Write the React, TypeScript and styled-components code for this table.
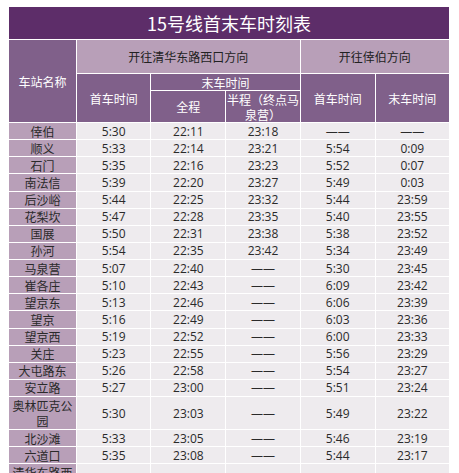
import React from "react";
import styled, { createGlobalStyle } from "styled-components";

const Global = createGlobalStyle`
  html, body { margin: 0; padding: 0; background: #ffffff; }
  body {
    padding: 6px 0 0 8px;
    font-family: "Open Sans", "Noto Sans CJK SC", sans-serif;
  }
`;

const Table = styled.table`
  width: 442px;
  table-layout: fixed;
  border-collapse: collapse;
  border: 1px solid #ffffff;
  font-size: 12px;
  line-height: 15px;
`;

const Row = styled.tr<{ $h: number }>`
  height: ${(p) => p.$h}px;
`;

const Cell = styled.td`
  border: 1px solid #ffffff;
  padding: 0 3px;
  text-align: center;
  vertical-align: middle;
  overflow: hidden;
`;

const TitleCell = styled(Cell)`
  background: #5d2d69;
  color: #ffffff;
  font-size: 18px;
  font-family: "Noto Sans CJK SC", sans-serif;
`;

const GroupCell = styled(Cell)`
  background: #b89fb8;
  color: #222222;
  font-family: "Noto Sans CJK SC", sans-serif;
`;

const HeadCell = styled(Cell)<{ $tight?: boolean }>`
  background: #80608a;
  color: #ffffff;
  font-family: "Noto Sans CJK SC", sans-serif;
  padding: ${(p) => (p.$tight ? "0" : "0 3px")};
  white-space: ${(p) => (p.$tight ? "nowrap" : "normal")};
`;

const StationCell = styled(Cell)`
  background: #b89fb8;
  color: #2a2a2a;
  font-family: "Noto Sans CJK SC", sans-serif;
`;

const DataCell = styled(Cell)`
  background: #eeebee;
  color: #2a2a2a;
`;

type Stop = [string, string, string, string, string, string];

const stops: Stop[] = [
  ["倖伯", "5:30", "22:11", "23:18", "——", "——"],
  ["顺义", "5:33", "22:14", "23:21", "5:54", "0:09"],
  ["石门", "5:35", "22:16", "23:23", "5:52", "0:07"],
  ["南法信", "5:39", "22:20", "23:27", "5:49", "0:03"],
  ["后沙峪", "5:44", "22:25", "23:32", "5:44", "23:59"],
  ["花梨坎", "5:47", "22:28", "23:35", "5:40", "23:55"],
  ["国展", "5:50", "22:31", "23:38", "5:38", "23:52"],
  ["孙河", "5:54", "22:35", "23:42", "5:34", "23:49"],
  ["马泉营", "5:07", "22:40", "——", "5:30", "23:45"],
  ["崔各庄", "5:10", "22:43", "——", "6:09", "23:42"],
  ["望京东", "5:13", "22:46", "——", "6:06", "23:39"],
  ["望京", "5:16", "22:49", "——", "6:03", "23:36"],
  ["望京西", "5:19", "22:52", "——", "6:00", "23:33"],
  ["关庄", "5:23", "22:55", "——", "5:56", "23:29"],
  ["大屯路东", "5:26", "22:58", "——", "5:54", "23:27"],
  ["安立路", "5:27", "23:00", "——", "5:51", "23:24"],
  ["奥林匹克公园", "5:30", "23:03", "——", "5:49", "23:22"],
  ["北沙滩", "5:33", "23:05", "——", "5:46", "23:19"],
  ["六道口", "5:35", "23:08", "——", "5:44", "23:17"],
  ["清华东路西口", "5:37", "23:10", "——", "5:42", "23:15"],
];

const widths = [68, 74, 75, 74, 75, 74];

export default function App() {
  return (
    <>
      <Global />
      <Table>
        <colgroup>
          {widths.map((w, i) => (
            <col key={i} style={{ width: w }} />
          ))}
        </colgroup>
        <thead>
          <Row $h={33}>
            <TitleCell colSpan={6}>15号线首末车时刻表</TitleCell>
          </Row>
          <Row $h={34}>
            <HeadCell rowSpan={3}>车站名称</HeadCell>
            <GroupCell colSpan={3}>开往清华东路西口方向</GroupCell>
            <GroupCell colSpan={2}>开往倖伯方向</GroupCell>
          </Row>
          <Row $h={17}>
            <HeadCell rowSpan={2}>首车时间</HeadCell>
            <HeadCell colSpan={2}>末车时间</HeadCell>
            <HeadCell rowSpan={2}>首车时间</HeadCell>
            <HeadCell rowSpan={2}>末车时间</HeadCell>
          </Row>
          <Row $h={32}>
            <HeadCell>全程</HeadCell>
            <HeadCell $tight>
              半程（终点马
              <br />
              泉营）
            </HeadCell>
          </Row>
        </thead>
        <tbody>
          {stops.map((s) => (
            <Row key={s[0]} $h={s[0].length > 5 ? 33 : 17.14}>
              <StationCell>{s[0]}</StationCell>
              {s.slice(1).map((v, i) => (
                <DataCell key={i}>{v}</DataCell>
              ))}
            </Row>
          ))}
        </tbody>
      </Table>
    </>
  );
}
